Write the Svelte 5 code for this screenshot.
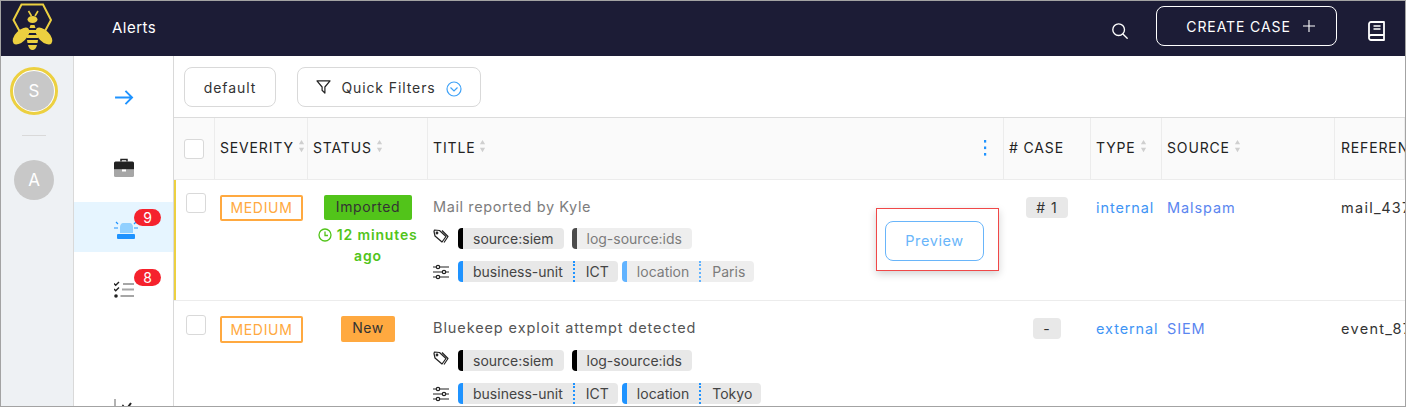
<script>
  const alerts = [
    {
      severity: "MEDIUM",
      status: "Imported",
      statusClass: "imported",
      age: "12 minutes ago",
      title: "Mail reported by Kyle",
      tags: ["source:siem", "log-source:ids"],
      fields: [["business-unit", "ICT"], ["location", "Paris"]],
      caseNo: "# 1",
      type: "internal",
      source: "Malspam",
      reference: "mail_4371",
      preview: true
    },
    {
      severity: "MEDIUM",
      status: "New",
      statusClass: "new",
      title: "Bluekeep exploit attempt detected",
      tags: ["source:siem", "log-source:ids"],
      fields: [["business-unit", "ICT"], ["location", "Tokyo"]],
      caseNo: "-",
      type: "external",
      source: "SIEM",
      reference: "event_87"
    }
  ];
</script>

{#snippet sorter()}
  <svg class="sorter" viewBox="0 0 8 16" fill="#cfcfcf">
    <path d="M4 1l3 5H1zM4 15l3-5H1z"></path>
  </svg>
{/snippet}

<div class="app">
  <header class="topbar">
    <svg class="logo" viewBox="0 0 62 55" fill="#ecd040">
      <path d="M19 31l-6.500-12L20.500 3.500h21.500L50 19l-6.500 12" fill="none" stroke="#ecd040" stroke-width="2"></path>
      <path d="M27.500 10l3 5M37 10l-3 5" fill="none" stroke="#ecd040" stroke-width="1.600"></path>
      <ellipse cx="31.500" cy="18.500" rx="5" ry="3.500"></ellipse>
      <path d="M29.500 24h4l1 3h-6zM27.500 29h8l1 3h-10zM26 34h11v3H26zM26 39h11l-.5 3H26.500zM27 44h9c-.5 3-2.500 5-4.500 5s-4-2-4.500-5z"></path>
      <ellipse cx="20" cy="35" rx="10.500" ry="5.500" transform="rotate(-45 20 35)"></ellipse>
      <ellipse cx="43" cy="35" rx="10.500" ry="5.500" transform="rotate(45 43 35)"></ellipse>
    </svg>
    <span class="page-title">Alerts</span>
    <div class="topbar-right">
      <svg class="search" viewBox="0 0 20 20" fill="none" stroke="#fff" stroke-width="1.500" stroke-linecap="round">
        <circle cx="8.500" cy="8.500" r="6.500"></circle>
        <path d="M13.500 13.500L18 18"></path>
      </svg>
      <button type="button" class="create">
        CREATE CASE
        <svg viewBox="0 0 14 14" fill="none" stroke="#fff" stroke-width="1.300"><path d="M7 0v14M0 7h14"></path></svg>
      </button>
      <svg class="book" viewBox="0 0 18 20" fill="none" stroke="#fff" stroke-width="1.800" stroke-linejoin="round">
        <path d="M1 16V3a2 2 0 0 1 2-2h13v18H3a2 2 0 0 1-2-2v-1a2 2 0 0 1 2-2h13"></path>
        <path d="M5.500 5h7M5.500 8h7" stroke-width="1.500"></path>
      </svg>
    </div>
  </header>

  <div class="body">
    <aside class="rail">
      <div class="avatar-ring"><div class="avatar">S</div></div>
      <div class="rail-sep"></div>
      <div class="avatar">A</div>
    </aside>

    <nav class="sidebar">
      <div class="nav-item first">
        <svg class="arrow" viewBox="0 0 20 18" fill="none" stroke="#1f93ff" stroke-width="2">
          <path d="M0 9h18M11 2l7 7-7 7"></path>
        </svg>
      </div>
      <div class="nav-item second">
        <svg class="nav-icon" viewBox="0 0 20 20">
          <path d="M7 3.500V1.500h6v2" fill="none" stroke="#222" stroke-width="1.500"></path>
          <path d="M1.500 3.500h17A1.500 1.500 0 0 1 20 5v6.500H0V5a1.500 1.500 0 0 1 1.500-1.500z" fill="#222"></path>
          <path d="M0 12h20v5.500a1.500 1.500 0 0 1-1.500 1.500h-17A1.500 1.500 0 0 1 0 17.500z" fill="#a6a6a6"></path>
          <path d="M8 11.500h4v2H8z" fill="#fff"></path>
        </svg>
      </div>
      <div class="nav-item active">
        <svg class="nav-icon" viewBox="0 0 26 20">
          <path d="M7 12V6c0-2 1.500-4 3-4h7c1.500 0 3 2 3 4v6z" fill="#91d0ff"></path>
          <rect x="4" y="13" width="18" height="5" rx="1" fill="#1f93ff"></rect>
          <path d="M1 7h4M21 7h4M3 1l2 2M23 1l-2 2" stroke="#1f93ff" stroke-width="1.200" fill="none"></path>
        </svg>
        <span class="badge">9</span>
      </div>
      <div class="nav-item fourth">
        <svg class="nav-icon" viewBox="0 0 20 18">
          <path d="M0 2.500l1.700 1.700L5 1M0 8l1.700 1.700L5 6.500" fill="none" stroke="#222" stroke-width="1.400"></path>
          <circle cx="2" cy="15" r="1.800" fill="#222"></circle>
          <path d="M9 3h11M8 8.500h12M6.500 15H20" stroke="#a6a6a6" stroke-width="2"></path>
        </svg>
        <span class="badge">8</span>
      </div>
      <div class="nav-sep"></div>
      <svg class="nav-icon chart" viewBox="0 0 20 20">
        <path d="M1 0v19h19" fill="none" stroke="#999" stroke-width="1.500"></path>
        <path d="M5 14l4-7 3 4 5-7" fill="none" stroke="#222" stroke-width="2"></path>
      </svg>
    </nav>

    <main class="content">
      <div class="toolbar">
        <button type="button" class="tool default">default</button>
        <button type="button" class="tool filters">
          <svg class="funnel" viewBox="0 0 16 15" fill="none" stroke="#222" stroke-width="1.300" stroke-linejoin="round">
            <path d="M1 1h14L9.500 7.500V14l-3-3V7.500z"></path>
          </svg>
          Quick Filters
          <svg class="chev" viewBox="0 0 16 16" fill="none" stroke="#3fa2f7" stroke-width="1.200">
            <circle cx="8" cy="8" r="7"></circle>
            <path d="M4.500 6.500L8 10l3.500-3.500"></path>
          </svg>
        </button>
      </div>

      <div class="row head">
        <div class="cell check"><span class="box"></span></div>
        <div class="cell">SEVERITY{@render sorter()}</div>
        <div class="cell">STATUS{@render sorter()}</div>
        <div class="cell title-head">
          TITLE{@render sorter()}
          <svg class="kebab" viewBox="0 0 4 16" fill="#1f93ff">
            <rect x="1" y="0" width="2.200" height="2.600"></rect>
            <rect x="1" y="6.500" width="2.200" height="2.600"></rect>
            <rect x="1" y="13" width="2.200" height="2.600"></rect>
          </svg>
        </div>
        <div class="cell"># CASE</div>
        <div class="cell">TYPE{@render sorter()}</div>
        <div class="cell">SOURCE{@render sorter()}</div>
        <div class="cell ref-head">REFERENCE</div>
      </div>

      {#each alerts as alert}
        <div class="row alert" class:hovered={alert.preview}>
          <div class="cell check"><span class="box"></span></div>
          <div class="cell"><span class="severity">{alert.severity}</span></div>
          <div class="cell status">
            <span class="status-tag {alert.statusClass}">{alert.status}</span>
            {#if alert.age}
              <div class="age">
                <svg viewBox="0 0 14 14" fill="none" stroke="#52c41a" stroke-width="1.300">
                  <circle cx="7" cy="7" r="6"></circle>
                  <path d="M7 3.500V7.500H10"></path>
                </svg>
                {alert.age}
              </div>
            {/if}
          </div>
          <div class="cell detail">
            <div class="alert-title">{alert.title}</div>
            <div class="tag-line">
              <svg class="line-icon" viewBox="0 0 16 16" fill="none" stroke="#222" stroke-width="1.200" stroke-linejoin="round">
                <path d="M1 2.500L1.500 1l5 .5 6.500 6-4 5.500L2 7z"></path>
                <path d="M9 1.500l6 6-4 6"></path>
                <circle cx="4" cy="4" r=".8"></circle>
              </svg>
              {#each alert.tags as tag, i}
                <span class="tag" class:faded={alert.preview && i === 1}>{tag}</span>
              {/each}
            </div>
            <div class="tag-line fields">
              <svg class="line-icon" viewBox="0 0 16 16" fill="none" stroke="#222" stroke-width="1.200">
                <path d="M0 3h16M0 8h16M0 13h16"></path>
                <circle cx="5" cy="3" r="1.700" fill="#fff"></circle>
                <circle cx="11" cy="8" r="1.700" fill="#fff"></circle>
                <circle cx="5" cy="13" r="1.700" fill="#fff"></circle>
              </svg>
              {#each alert.fields as [key, value], i}
                <span class="tag field" class:faded={alert.preview && i === 1}>
                  <span class="key">{key}</span><span class="value">{value}</span>
                </span>
              {/each}
            </div>
            {#if alert.preview}
              <div class="preview-box">
                <button type="button" class="preview">Preview</button>
              </div>
            {/if}
          </div>
          <div class="cell case"><span class="case-tag">{alert.caseNo}</span></div>
          <div class="cell link">{alert.type}</div>
          <div class="cell link source">{alert.source}</div>
          <div class="cell ref">{alert.reference}</div>
        </div>
      {/each}
    </main>
  </div>
</div>

<style>
  :global(body) {
    margin: 0;
    background: #fff;
  }
  .app {
    width: 1406px;
    height: 407px;
    box-sizing: border-box;
    border: 1px solid #a3a3a3;
    overflow: hidden;
    font-family: Inter, "Open Sans", sans-serif;
    color: #333;
    display: flex;
    flex-direction: column;
  }
  button {
    font-family: inherit;
    background: none;
    cursor: pointer;
  }

  .topbar {
    height: 55px;
    flex: none;
    background: #1c1c36;
    display: flex;
    align-items: center;
    color: #fff;
  }
  .logo {
    width: 62px;
    height: 55px;
    flex: none;
    margin-right: 49px;
  }
  .page-title {
    font-size: 15px;
    margin-top: -3px;
    letter-spacing: .5px;
  }
  .topbar-right {
    margin-left: auto;
    display: flex;
    align-items: center;
  }
  .search {
    width: 18px;
    height: 18px;
    margin: 5px 27px 0 0;
  }
  .create {
    width: 181px;
    height: 40px;
    margin-top: -5px;
    border: 1px solid #fff;
    border-radius: 8px;
    color: #fff;
    font-size: 14px;
    letter-spacing: .9px;
    display: flex;
    align-items: center;
    justify-content: center;
    gap: 12px;
    padding: 0 0 0 8px;
  }
  .create svg {
    width: 12px;
    height: 12px;
  }
  .book {
    width: 18px;
    height: 20px;
    margin: 4px 19px 0 31px;
  }

  .body {
    flex: 1;
    display: flex;
    min-height: 0;
  }
  .rail {
    flex: none;
    background: #eef1f4;
    border-right: 1px solid #d9d9d9;
    display: flex;
    flex-direction: column;
    align-items: center;
    padding-top: 11px;
    padding-right: 6px;
    width: 66px;
  }
  .avatar {
    width: 40px;
    height: 40px;
    border-radius: 50%;
    background: #c8c8c8;
    color: #fff;
    font-size: 17px;
    display: flex;
    align-items: center;
    justify-content: center;
    flex: none;
  }
  .avatar-ring {
    width: 48px;
    height: 48px;
    box-sizing: border-box;
    border: 3px solid #ecd040;
    border-radius: 50%;
    display: flex;
    align-items: center;
    justify-content: center;
    background: #fff;
  }
  .rail-sep {
    width: 24px;
    height: 1px;
    background: #d9d9d9;
    margin: 20px 0 24px;
  }

  .sidebar {
    width: 99px;
    flex: none;
    border-right: 1px solid #d9d9d9;
    padding-top: 16px;
    display: flex;
    flex-direction: column;
    align-items: center;
  }
  .nav-item {
    position: relative;
    align-self: stretch;
    height: 50px;
    flex: none;
    display: flex;
    align-items: center;
    justify-content: center;
  }
  .nav-item.second {
    margin-top: 21px;
  }
  .nav-item.active {
    margin-top: 9px;
    background: #e6f5ff;
  }
  .nav-item.fourth {
    margin-top: 13px;
  }
  .arrow {
    width: 19px;
    height: 17px;
    margin-left: 2px;
  }
  .nav-icon {
    width: 20px;
    height: 20px;
  }
  .active .nav-icon {
    width: 26px;
    height: 20px;
    margin: 8px 0 0 4px;
  }
  .badge {
    position: absolute;
    left: 60px;
    top: 7px;
    width: 27px;
    height: 17px;
    border-radius: 9px;
    background: #f5222d;
    color: #fff;
    font-size: 14px;
    line-height: 17px;
    text-align: center;
  }
  .fourth .badge {
    top: 4px;
  }
  .fourth .nav-icon {
    height: 18px;
  }
  .nav-sep {
    width: 20px;
    height: 1px;
    background: #e4e4e4;
    margin-top: 37px;
  }
  .chart {
    flex: none;
    margin-top: 47px;
  }

  .content {
    flex: 1;
    min-width: 0;
    overflow: hidden;
  }
  .toolbar {
    height: 62px;
    box-sizing: border-box;
    border-bottom: 1px solid #dcdcdc;
    padding: 11px 10px 0;
    display: flex;
    align-items: flex-start;
    gap: 21px;
  }
  .tool {
    height: 40px;
    border: 1px solid #d9d9d9;
    border-radius: 8px;
    color: #333;
    font-size: 14px;
    letter-spacing: .9px;
    display: flex;
    align-items: center;
    justify-content: center;
    padding: 0;
  }
  .default {
    width: 92px;
  }
  .filters {
    width: 184px;
    gap: 8px;
  }
  .funnel {
    width: 15px;
    height: 14px;
    margin-right: 2px;
  }
  .chev {
    width: 16px;
    height: 16px;
    margin: 3px 0 0 2px;
  }

  .row {
    display: grid;
    grid-template-columns: 41px 93px 120px 576px 87px 71px 173px 1fr;
    border-bottom: 1px solid #ececec;
  }
  .cell {
    padding-left: 5px;
    min-width: 0;
    white-space: nowrap;
    box-sizing: border-box;
  }
  .head {
    height: 62px;
    box-sizing: border-box;
    background: #fafafa;
    font-size: 14px;
    color: #222;
    letter-spacing: .85px;
  }
  .head .cell {
    display: flex;
    align-items: center;
    border-right: 1px solid #ececec;
    padding-bottom: 2px;
    position: relative;
  }
  .head .check {
    padding: 0 0 0 10px;
  }
  .head .ref-head {
    padding-left: 6px;
  }
  .sorter {
    width: 7px;
    height: 14px;
    margin: -4px 0 0 4px;
    flex: none;
  }
  .kebab {
    position: absolute;
    right: 16px;
    top: 22px;
    width: 4px;
    height: 16px;
  }
  .box {
    display: block;
    width: 20px;
    height: 20px;
    box-sizing: border-box;
    border: 1px solid #d9d9d9;
    border-radius: 3px;
    background: #fff;
  }

  .alert {
    height: 121px;
    box-sizing: border-box;
    font-size: 14.500px;
    padding-top: 14px;
  }
  .alert:nth-child(odd) {
    background: #fafafa;
  }
  .alert.hovered {
    background: #fff;
    box-shadow: inset 2px 0 0 #ecd040;
  }
  .alert .check {
    padding-left: 12px;
  }
  .hovered .check .box {
    margin-top: -1px;
  }
  .severity {
    display: inline-block;
    width: 83px;
    height: 27px;
    margin-top: 1px;
    box-sizing: border-box;
    border: 2px solid #ffa940;
    border-radius: 2px;
    color: #ffa940;
    font-size: 14px;
    line-height: 23px;
    text-align: center;
    letter-spacing: .7px;
  }
  .hovered .severity {
    height: 26px;
    line-height: 22px;
  }
  .status {
    text-align: center;
    padding: 1px 0 0;
    white-space: normal;
  }
  .status-tag {
    display: inline-block;
    height: 26px;
    line-height: 24px;
    border-radius: 2px;
    font-size: 14px;
    color: #333;
    letter-spacing: .6px;
  }
  .imported {
    width: 88px;
    height: 25px;
    line-height: 23px;
    background: #52c41a;
  }
  .new {
    width: 54px;
    background: #ffa940;
  }
  .age {
    color: #52c41a;
    font-size: 14px;
    font-weight: 600;
    line-height: 21px;
    margin: 4px auto 0;
    width: 112px;
    letter-spacing: .85px;
  }
  .age svg {
    width: 14px;
    height: 14px;
    vertical-align: -2px;
  }
  .detail {
    position: relative;
  }
  .alert-title {
    line-height: 26px;
    letter-spacing: .9px;
    color: #555;
  }
  .hovered .alert-title {
    color: #7d7d7d;
    letter-spacing: .6px;
  }
  .tag-line {
    display: flex;
    align-items: center;
    height: 21px;
    margin-top: 9px;
    gap: 8px;
    font-size: 14px;
  }
  .hovered .tag-line {
    margin-top: 8px;
  }
  .tag-line.fields,
  .hovered .tag-line.fields {
    gap: 4px;
    margin-top: 12px;
  }
  .line-icon {
    width: 16px;
    height: 16px;
    flex: none;
    margin-right: 1px;
    margin-top: -4px;
  }
  .fields .line-icon {
    margin-right: 5px;
    margin-top: 0;
  }
  .tag {
    height: 21px;
    line-height: 21px;
    box-sizing: border-box;
    background: #e8e8e8;
    border-left: 5px solid #000;
    border-radius: 4px;
    padding: 0 10px;
    color: #444;
  }
  .tag.faded {
    opacity: .7;
  }
  .field {
    border-left-color: #1f93ff;
    display: flex;
    padding: 0;
  }
  .key {
    padding: 0 10px;
    border-right: 2px dotted #1f93ff;
  }
  .value {
    padding: 0 9px 0 11px;
  }
  .preview-box {
    position: absolute;
    left: 448px;
    top: 14px;
    width: 123px;
    height: 63px;
    box-sizing: border-box;
    border: 1px solid #f04848;
    box-shadow: 0 3px 8px rgba(0, 0, 0, .18);
    background: #fff;
    padding: 12px 0 0 8px;
  }
  .preview {
    display: block;
    width: 99px;
    height: 40px;
    border: 1px solid #69b5fa;
    border-radius: 8px;
    color: #69b5fa;
    font-size: 14.500px;
    padding: 0 0 2px;
    letter-spacing: .6px;
  }
  .case {
    padding: 3px 1px 0 0;
    text-align: center;
  }
  .case-tag {
    display: inline-block;
    min-width: 25px;
    height: 21px;
    line-height: 21px;
    padding: 0 10px;
    box-sizing: border-box;
    background: #e8e8e8;
    border-radius: 4px;
    font-size: 14px;
    text-align: center;
    letter-spacing: 1px;
  }
  .alert .link {
    padding-top: 2px;
    line-height: 24px;
    letter-spacing: .9px;
  }
  .link {
    color: #3f95f5;
  }
  .source {
    color: #5b86f0;
  }
  .alert .ref {
    padding: 2px 0 0 6px;
    line-height: 24px;
    letter-spacing: 1.300px;
    overflow: hidden;
    color: #333;
  }
</style>
